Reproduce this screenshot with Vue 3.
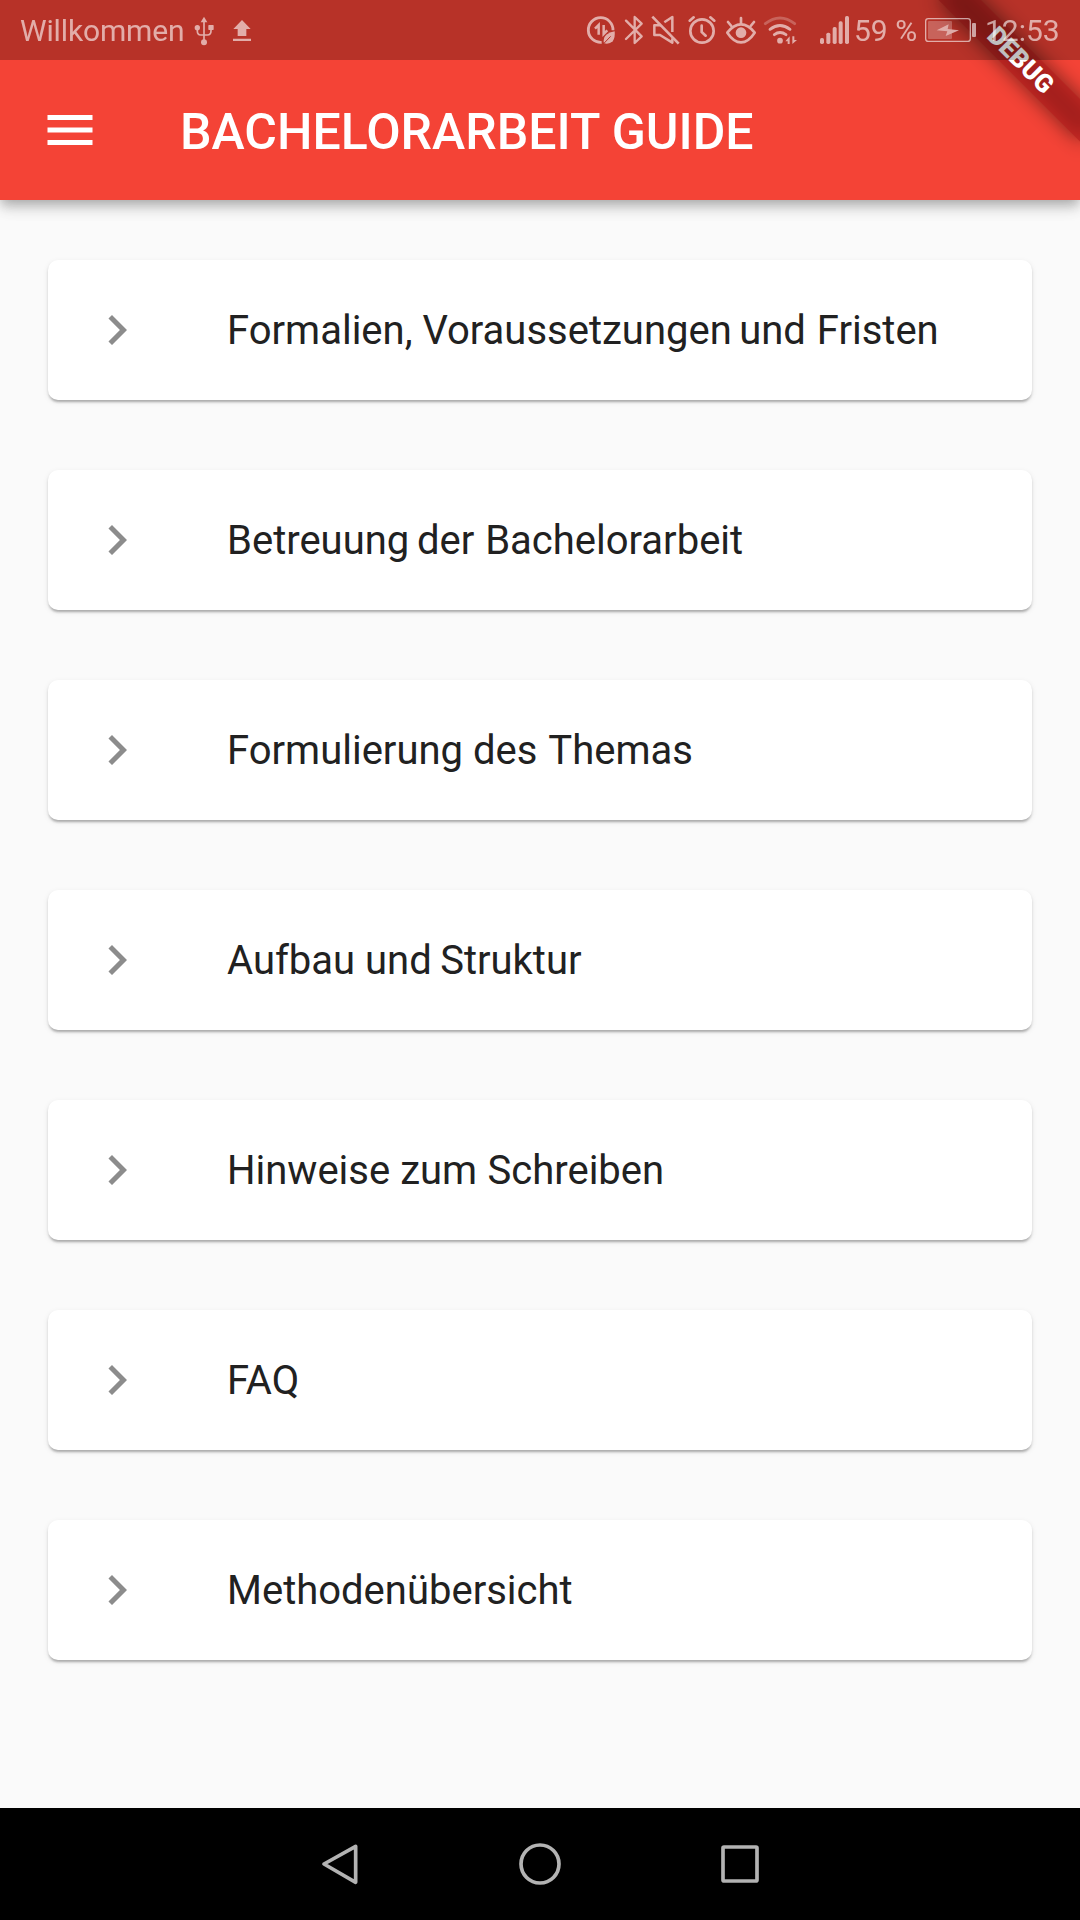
<script setup>
const items = [
  [['Formalien,', 0], ['Voraussetzungen', 0], ['und', -2.5], ['Fristen', 1]],
  [['Betreuung', 0], ['der', -2.25], ['Bachelorarbeit', 1]],
  [['Formulierung', 0], ['des', 0], ['Themas', 1]],
  [['Aufbau', 0], ['und', 0], ['Struktur', -1.5]],
  [['Hinweise', 0], ['zum', 0], ['Schreiben', 0.5]],
  [['FAQ', 0]],
  [['Methodenübersicht', 0]],
]
const bars = [
  { x: 60, y: 114 },
  { x: 79, y: 98 },
  { x: 98, y: 81 },
  { x: 116, y: 64 },
  { x: 135, y: 48 },
]
</script>

<template>
  <div class="screen">
    <header class="appbar">
      <svg class="menu" width="60" height="60" viewBox="0 0 24 24">
        <path d="M3 18h18v-2H3v2zm0-5h18v-2H3v2zm0-7v2h18V6H3z" fill="#fff" />
      </svg>
      <h1 class="title">BACHELORARBEIT GUIDE</h1>
    </header>

    <main class="list">
      <div v-for="(item, i) in items" :key="i" class="card">
        <svg class="chevron" width="60" height="60" viewBox="0 0 24 24">
          <path d="M10 6L8.59 7.41 13.17 12l-4.58 4.59L10 18l6-6z" fill="#8c8c8c" />
        </svg>
        <span class="label"><template v-for="([word, shift], j) in item" :key="j">{{ j ? ' ' : '' }}<span :style="{ marginLeft: shift + 'px' }">{{ word }}</span></template></span>
      </div>
    </main>

    <nav class="navbar">
      <svg width="60" height="60" viewBox="0 0 180 180" class="nav-icon">
        <path d="M42 90L137 37V145Z" />
      </svg>
      <svg width="60" height="60" viewBox="0 0 180 180" class="nav-icon">
        <circle cx="90" cy="90" r="57" />
      </svg>
      <svg width="60" height="60" viewBox="0 0 180 180" class="nav-icon">
        <rect x="39" y="39" width="102" height="102" rx="3" />
      </svg>
    </nav>

    <div class="banner-anchor">
      <div class="banner-shadow"></div>
      <div class="banner">DEBUG</div>
    </div>

    <div class="statusbar">
      <div class="tinted">
        <span class="carrier">Willkommen</span>
        <svg width="34" height="60" viewBox="561 0 102 180" fill="none" stroke="#fff" stroke-width="5">
          <path d="M612 64V126M592 88V93Q592 105 602 105H622Q633 105 633 93V88" />
          <g fill="#fff" stroke="none">
            <path d="M612 50L622 67H602Z" />
            <circle cx="592" cy="83" r="8" />
            <rect x="625" y="75" width="16" height="15" rx="2" />
            <circle cx="612" cy="127" r="9" />
          </g>
        </svg>
        <svg width="40" height="60" viewBox="663 0 120 180" fill="#fff">
          <path d="M726 60L752 87H739V108H713V87H700ZM699 116H753V123H699Z" />
        </svg>
      </div>

      <div class="tinted">
        <!-- data saver -->
        <svg width="35" height="60" viewBox="45 0 105 180" fill="none" stroke="#fff" stroke-width="8.500">
          <path d="M95 127A37 37 0 1 1 129 91" />
          <path d="M86 104V75L75 86M101 75V102L112 91" stroke-width="7.500" />
          <path d="M134 94Q136 114 128 124Q118 134 102 130Q98 113 109 104Q118 97 134 94Z" fill="#fff" stroke="none" />
          <path d="M98 134L122 109" stroke="#b73228" stroke-width="3" />
        </svg>
        <!-- bluetooth -->
        <svg width="28" height="60" viewBox="150 0 84 180" fill="none" stroke="#fff" stroke-width="7" stroke-linejoin="round" stroke-linecap="round">
          <path d="M168 62L215 109L194 129V51L215 71L168 117" />
        </svg>
        <!-- muted -->
        <svg width="36" height="60" viewBox="234 0 108 180" fill="none" stroke="#fff" stroke-width="7.500">
          <path d="M247 50L326 131" stroke-width="8" />
          <path d="M273 76H253V105H270L307 128V115M283 67L307 51V96" stroke-linejoin="round" />
        </svg>
        <!-- alarm -->
        <svg width="36" height="60" viewBox="342 0 108 180" fill="none" stroke="#fff" stroke-width="8" stroke-linecap="round">
          <circle cx="396" cy="93" r="35" />
          <path d="M395 77V96L407 107M359 62L371 52M433 62L421 52" />
        </svg>
        <!-- eye comfort -->
        <svg width="40" height="60" viewBox="450 0 120 180" fill="none" stroke="#fff" stroke-width="8" stroke-linecap="round">
          <path d="M472 98Q491 73 513 73Q535 73 554 98Q535 127 513 127Q491 127 472 98Z" stroke-linejoin="round" />
          <circle cx="513" cy="98" r="16" fill="#fff" stroke="none" />
          <path d="M513 54V70M474 66L484 78M552 66L542 78" />
        </svg>
        <!-- wifi -->
        <svg width="40" height="60" viewBox="570 0 120 180" fill="none" stroke="#fff" stroke-width="8.500" stroke-linecap="round">
          <path d="M586 71Q630 37 674 71" opacity=".4" />
          <path d="M600 88Q630 65 660 88M613 104Q630 91 648 104" />
          <g fill="#fff" stroke="none">
            <circle cx="630" cy="122" r="8.500" />
            <path d="M659 109V132H653V124H646ZM667 109V132L681 120H673V109Z" />
          </g>
        </svg>
        <svg class="signal" width="37" height="60" viewBox="48 0 111 180" fill="#fff">
          <rect v-for="b in bars" :key="b.x" :x="b.x" :y="b.y" width="12" :height="132 - b.y" rx="5" />
        </svg>
        <span class="percent">59 %</span>
        <svg width="58" height="60" viewBox="366 0 174 180" fill="#fff">
          <rect x="377" y="56" width="134" height="68" rx="8" fill="none" stroke="#fff" stroke-width="4" />
          <rect x="384" y="63" width="72" height="54" rx="3" opacity=".4" />
          <rect x="516" y="69" width="12" height="42" rx="3" />
          <path d="M410 91L446 73L443 87L477 91L437 108L442 94Z" />
        </svg>
        <span class="time">12:53</span>
      </div>
    </div>
  </div>
</template>

<style>
body {
  margin: 0;
}
</style>

<style scoped>
.screen {
  position: relative;
  width: 1080px;
  height: 1920px;
  overflow: hidden;
  display: flex;
  flex-direction: column;
  background: #fafafa;
  font-family: Roboto, sans-serif;
}
svg {
  flex: none;
  display: block;
}
.appbar {
  flex: none;
  box-sizing: border-box;
  height: 200px;
  padding: 60px 0 0 40px;
  display: flex;
  align-items: center;
  background: #f44336;
  box-shadow: 0 5px 10px -2px rgba(0, 0, 0, 0.2), 0 10px 12px rgba(0, 0, 0, 0.1), 0 2px 20px rgba(0, 0, 0, 0.1);
}
.title {
  margin: 4px 0 0 80px;
  font-size: 50px;
  line-height: 60px;
  font-weight: 500;
  color: #fff;
  white-space: nowrap;
}
.list {
  flex: 1;
  display: flex;
  flex-direction: column;
  gap: 70px;
  padding: 60px 48px 0;
}
.card {
  flex: none;
  height: 140px;
  display: flex;
  align-items: center;
  background: #fff;
  border-radius: 10px;
  box-shadow: 0 4px 2.5px -2.5px rgba(0, 0, 0, 0.16), 0 2px 2.5px rgba(0, 0, 0, 0.14), 0 2px 6px rgba(0, 0, 0, 0.08);
}
.chevron {
  margin-left: 39px;
}
.label {
  margin: 2px 0 0 80px;
  font-size: 40px;
  line-height: 48px;
  color: #212121;
  white-space: pre;
}
.navbar {
  flex: none;
  height: 112px;
  display: flex;
  align-items: center;
  justify-content: center;
  gap: 140px;
  background: #000;
}
.nav-icon {
  fill: none;
  stroke: #b3b3b3;
  stroke-width: 11;
  stroke-linejoin: round;
}
.banner-anchor {
  position: absolute;
  left: 1080px;
  top: 0;
  width: 0;
  height: 0;
  transform: rotate(45deg);
}
.banner-shadow,
.banner {
  position: absolute;
  left: -100px;
  top: 70px;
  width: 200px;
  height: 30px;
}
.banner-shadow {
  background: rgba(0, 0, 0, 0.5);
  filter: blur(10px);
}
.banner {
  background: rgba(183, 28, 28, 0.63);
  color: #fff;
  font-size: 25.5px;
  line-height: 28px;
  font-weight: 900;
  text-align: center;
  text-indent: 1px;
}
.statusbar {
  position: absolute;
  inset: 0 0 auto 0;
  height: 60px;
  display: flex;
  justify-content: space-between;
  background: rgba(0, 0, 0, 0.25);
}
.tinted {
  display: flex;
  align-items: center;
  opacity: 0.6;
  color: #fff;
  font-size: 30px;
  line-height: 60px;
  white-space: nowrap;
}
.carrier,
.percent,
.time {
  padding-top: 2px;
}
.carrier {
  width: 167px;
  padding-left: 20px;
  letter-spacing: -0.15px;
}
.signal {
  margin-left: 16px;
}
.percent {
  width: 68px;
  padding-left: 1px;
}
.time {
  width: 95px;
  padding-left: 5px;
}
</style>
